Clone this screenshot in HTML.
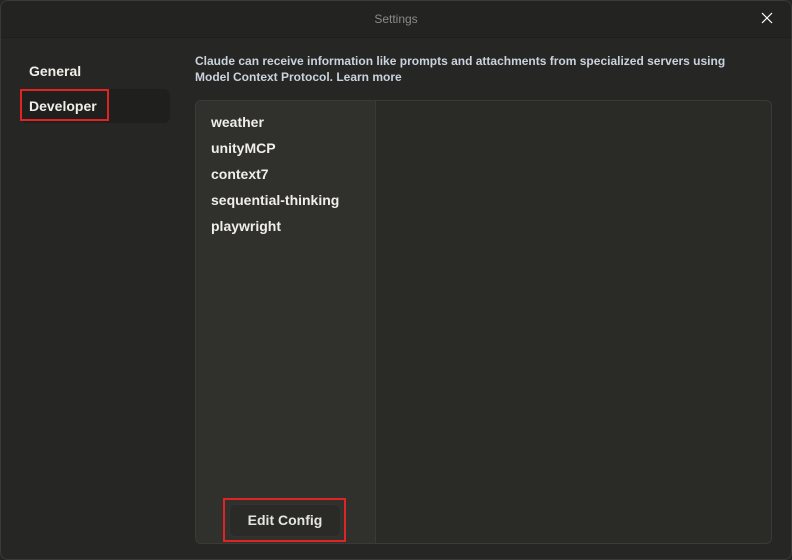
<!DOCTYPE html>
<html><head><meta charset="utf-8"><style>
html,body{margin:0;padding:0;width:792px;height:560px;overflow:hidden;background:#262624;font-family:"Liberation Sans",sans-serif;}
.win{position:absolute;left:0;top:0;width:790px;height:558px;border:1px solid #3a3a38;border-radius:8px;background:#262624;overflow:hidden;}
.title{position:absolute;left:0;top:0;width:100%;height:36px;background:#232322;border-bottom:1px solid #1e1e1d;color:#8a8a86;font-size:12px;text-align:center;line-height:36px;}
.close{position:absolute;right:18px;top:11px;width:12px;height:12px;}
.nav{position:absolute;left:20px;width:149px;height:34px;border-radius:6px;color:#f0eee8;font-weight:bold;font-size:14px;line-height:34px;padding-left:8px;box-sizing:border-box;}
.desc{position:absolute;left:194px;top:52px;width:555px;color:#c9d3dd;font-weight:bold;font-size:12px;line-height:16px;}
.panel{position:absolute;left:194px;top:99px;width:577px;height:444px;border:1px solid #3a3a37;border-radius:6px;background:#2a2a27;overflow:hidden;box-sizing:border-box;}
.list{position:absolute;left:0;top:0;width:179px;height:100%;background:#30302c;border-right:1px solid #3a3a37;}
.item{position:absolute;left:15px;color:#f0eee8;font-weight:bold;font-size:14px;}
.btn{position:absolute;width:110px;height:31px;background:#2a2a26;border:1px solid #33332f;border-radius:6px;color:#e6e4de;font-weight:bold;font-size:14px;text-align:center;line-height:31px;}
.red{position:absolute;border:2px solid #e02424;box-sizing:border-box;}
</style></head><body>
<div class="win">
<div class="title">Settings
<svg class="close" viewBox="0 0 12 12"><path d="M1 1L11 11M11 1L1 11" stroke="#fff" stroke-width="1.2"/></svg></div>
<div class="nav" style="top:53px">General</div>
<div class="nav" style="top:88px;background:#1f1f1d">Developer</div>
<div class="desc">Claude can receive information like prompts and attachments from specialized servers using Model Context Protocol. Learn more</div>
<div class="panel"><div class="list">
<div class="item" style="top:13px">weather</div>
<div class="item" style="top:39px">unityMCP</div>
<div class="item" style="top:65px">context7</div>
<div class="item" style="top:91px">sequential-thinking</div>
<div class="item" style="top:117px">playwright</div>
</div></div>
</div>
<div class="btn" style="left:229px;top:504px">Edit Config</div>
<div class="red" style="left:20px;top:89px;width:89px;height:32px"></div>
<div class="red" style="left:223px;top:498px;width:123px;height:44px"></div>
</body></html>
